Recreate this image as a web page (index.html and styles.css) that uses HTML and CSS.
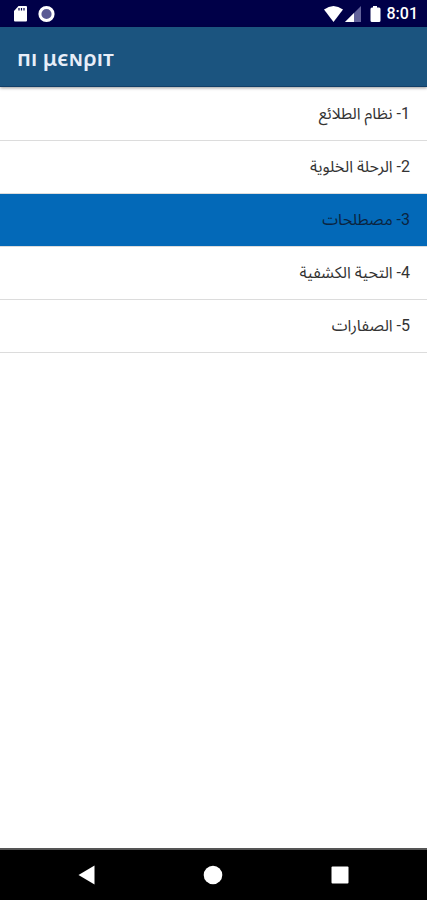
FILE: index.html
```
<!DOCTYPE html>
<html lang="ar">
<head>
    <meta charset="UTF-8">
    <meta name="viewport" content="width=device-width, initial-scale=1.0">
    <title>пı μєɴρıт</title>
    <link rel="stylesheet" href="styles.css">
</head>
<body>
    <div class="status-bar">
        <svg class="status-left" width="44" height="18" viewBox="0 0 44 18" aria-hidden="true">
            <path d="M6.500 1h7.500q1 0 1 1v13.500q0 1-1 1H3q-1 0-1-1V6z" fill="#fff"/>
            <path d="M7 3v2.500M9.500 3v2.500M12 3v2.500" stroke="#000048" stroke-width="1.200"/>
            <circle cx="34.500" cy="9" r="6.600" fill="#5a5a94" stroke="#fff" stroke-width="3"/>
        </svg>
        <svg width="58" height="18" viewBox="0 0 58 18" aria-hidden="true">
            <path d="M1 4.500Q10.500-2.500 20 4.500L10.500 17z" fill="#fff"/>
            <path d="M22 17L38 1v16z" fill="#62629a"/>
            <path d="M22 17l9-9v9z" fill="#fff"/>
            <path d="M50 1h4v1.500h2q1.500 0 1.500 1.500v11.500q0 1.500-1.500 1.500h-7q-1.500 0-1.500-1.500V4q0-1.500 1.500-1.500h1z" fill="#fff"/>
        </svg>
        <span class="clock">8:01</span>
    </div>
    <header>
        <h1>пı μєɴρıт</h1>
    </header>
    <main>
        <ul class="lessons" dir="rtl">
            <li><button>1- نظام الطلائع</button></li>
            <li><button>2- الرحلة الخلوية</button></li>
            <li><button class="selected">3- مصطلحات</button></li>
            <li><button>4- التحية الكشفية</button></li>
            <li><button>5- الصفارات</button></li>
        </ul>
    </main>
    <nav class="nav-bar">
        <button aria-label="Back">
            <svg width="20" height="20" viewBox="0 0 20 20"><path d="M17.500 .5v19L1.500 10z"/></svg>
        </button>
        <button aria-label="Home">
            <svg width="20" height="20" viewBox="0 0 20 20"><circle cx="10" cy="10" r="9.300"/></svg>
        </button>
        <button aria-label="Recent apps">
            <svg width="20" height="20" viewBox="0 0 20 20"><rect x="1.500" y="1.500" width="17" height="17" rx="1"/></svg>
        </button>
    </nav>
</body>
</html>
```
FILE: styles.css
```
* {
    box-sizing: border-box;
}
body {
    font-family: Roboto, "Noto Sans Arabic", "DejaVu Sans", sans-serif;
    margin: 0;
    min-height: 100vh;
    display: flex;
    flex-direction: column;
    background: #fff;
}
button {
    border: none;
    background: none;
    font-family: inherit;
    cursor: pointer;
}
.status-bar {
    display: flex;
    align-items: center;
    height: 27px;
    padding: 0 9px 0 12px;
    background: #000048;
    color: #fff;
}
.status-left {
    margin-right: auto;
}
.clock {
    margin-left: 6px;
    font-size: 16px;
    font-weight: 500;
}
header {
    display: flex;
    align-items: center;
    height: 60px;
    padding: 0 17px;
    background: #1b547f;
    border-bottom: 1px solid #123f68;
    box-shadow: 0 1px 3px rgba(0, 0, 0, 0.4);
}
h1 {
    margin: 0;
    font-family: "Noto Sans", sans-serif;
    font-size: 22px;
    font-weight: 600;
    color: #e8eef8;
}
main {
    flex: 1;
}
.lessons {
    list-style: none;
    margin: 0;
    padding: 1px 0 0;
}
.lessons li {
    border-bottom: 1px solid #dcdcdc;
}
.lessons button {
    display: block;
    width: 100%;
    height: 52px;
    padding: 0 17px;
    font-size: 16px;
    text-align: right;
    color: #333;
}
.lessons .selected {
    background: #0369b8;
    color: #0b2440;
}
.nav-bar {
    display: grid;
    grid-template-columns: repeat(3, 1fr);
    align-items: center;
    height: 52px;
    padding: 0 24px;
    background: #000;
    border-top: 2px solid #555;
}
.nav-bar button {
    display: flex;
    justify-content: center;
    padding: 0;
}
.nav-bar svg {
    fill: #fff;
}
```
